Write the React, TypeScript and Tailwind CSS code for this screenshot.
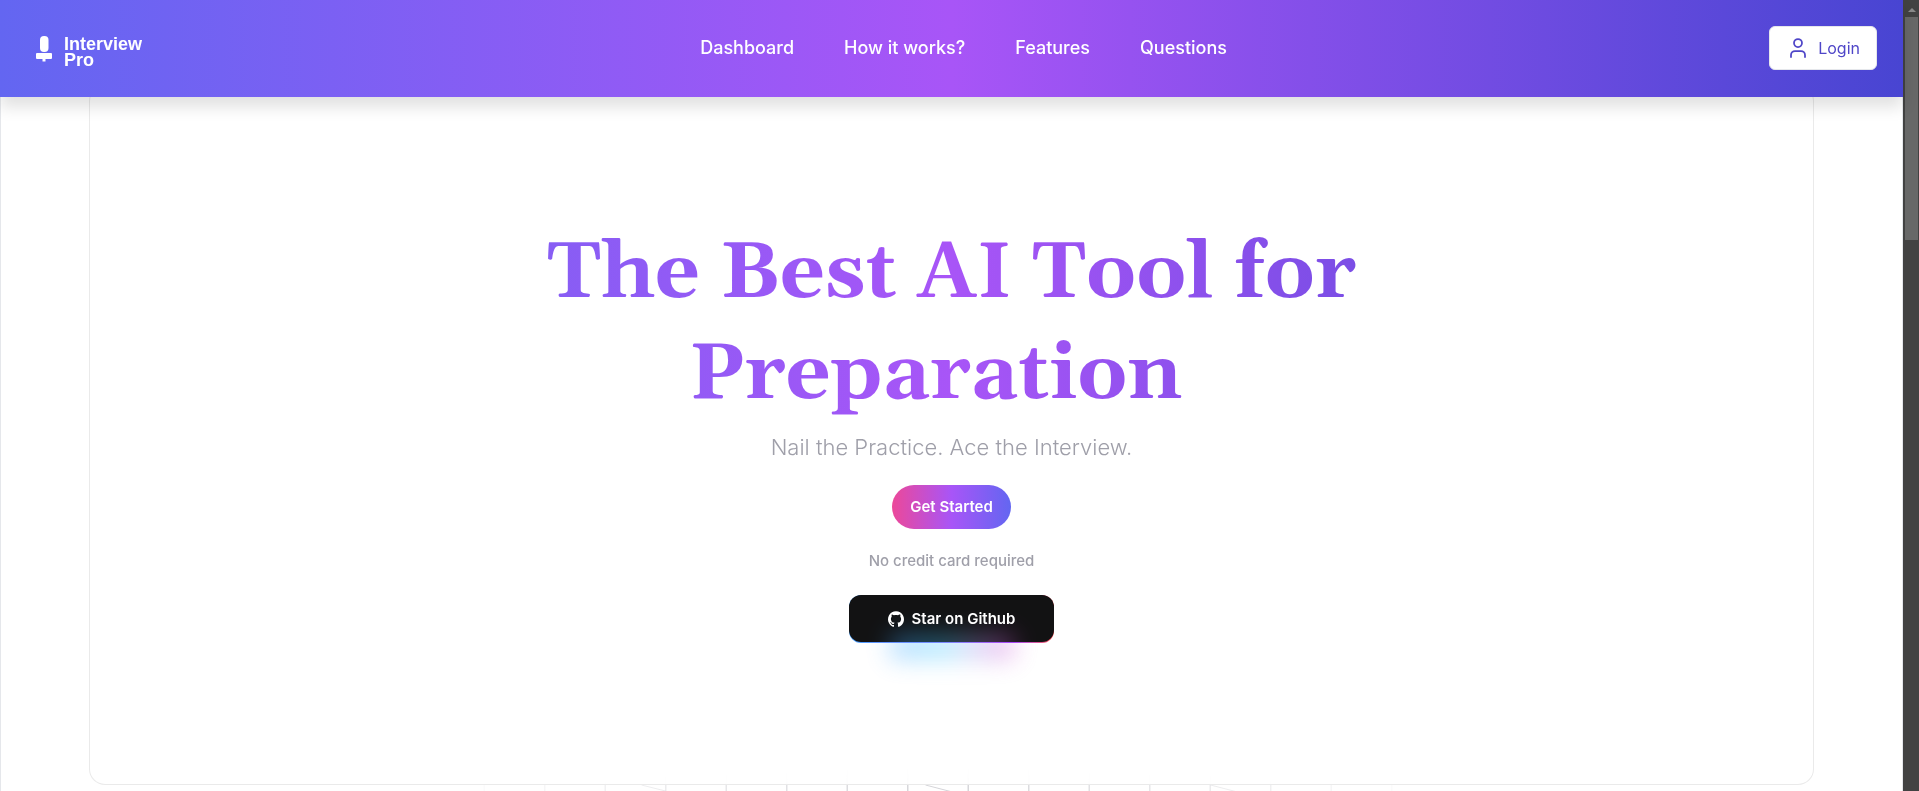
import { User } from "lucide-react";

const links = ["Dashboard", "How it works?", "Features", "Questions"];

const gridLines = Array.from({ length: 16 }, (_, i) => 484 + i * 60.5);

function GithubMark() {
  return (
    <svg viewBox="0 0 438.549 438.549" className="size-4" fill="currentColor" aria-hidden="true">
      <path d="M409.132 114.573c-19.608-33.596-46.205-60.194-79.798-79.8-33.598-19.607-70.277-29.408-110.063-29.408-39.781 0-76.472 9.804-110.063 29.408-33.596 19.605-60.192 46.204-79.8 79.8C9.803 148.168 0 184.854 0 224.63c0 47.78 13.94 90.745 41.827 128.906 27.884 38.164 63.906 64.572 108.063 79.227 5.14.954 8.945.283 11.419-1.996 2.475-2.282 3.711-5.14 3.711-8.562 0-.571-.049-5.708-.144-15.417a2549.81 2549.81 0 01-.144-25.406l-6.567 1.136c-4.187.767-9.469 1.092-15.846 1-6.374-.089-12.991-.757-19.842-1.999-6.854-1.231-13.229-4.086-19.13-8.559-5.898-4.473-10.085-10.328-12.56-17.556l-2.855-6.57c-1.903-4.374-4.899-9.233-8.992-14.559-4.093-5.331-8.232-8.945-12.419-10.848l-1.999-1.431c-1.332-.951-2.568-2.098-3.711-3.429-1.142-1.331-1.997-2.663-2.568-3.997-.572-1.335-.098-2.43 1.427-3.289 1.525-.859 4.281-1.276 8.28-1.276l5.708.853c3.807.763 8.516 3.042 14.133 6.851 5.614 3.806 10.229 8.754 13.846 14.842 4.38 7.806 9.657 13.754 15.846 17.847 6.184 4.093 12.419 6.136 18.699 6.136 6.28 0 11.704-.476 16.274-1.423 4.565-.952 8.848-2.383 12.847-4.285 1.713-12.758 6.377-22.559 13.988-29.41-10.848-1.14-20.601-2.857-29.264-5.14-8.658-2.286-17.605-5.996-26.835-11.14-9.235-5.137-16.896-11.516-22.985-19.126-6.09-7.614-11.088-17.61-14.987-29.979-3.901-12.374-5.852-26.648-5.852-42.826 0-23.035 7.52-42.637 22.557-58.817-7.044-17.318-6.379-36.732 1.997-58.24 5.52-1.715 13.706-.428 24.554 3.853 10.85 4.283 18.794 7.952 23.84 10.994 5.046 3.041 9.089 5.618 12.135 7.708 17.705-4.947 35.976-7.421 54.818-7.421s37.117 2.474 54.823 7.421l10.849-6.849c7.419-4.57 16.18-8.758 26.262-12.565 10.088-3.805 17.802-4.853 23.134-3.138 8.562 21.509 9.325 40.922 2.279 58.24 15.036 16.18 22.559 35.787 22.559 58.817 0 16.178-1.958 30.497-5.853 42.966-3.9 12.471-8.941 22.457-15.125 29.979-6.191 7.521-13.901 13.85-23.131 18.986-9.232 5.14-18.182 8.85-26.84 11.136-8.662 2.286-18.415 4.004-29.263 5.146 9.894 8.562 14.842 22.077 14.842 40.539v60.237c0 3.422 1.19 6.279 3.572 8.562 2.379 2.279 6.136 2.95 11.276 1.995 44.163-14.653 80.185-41.062 108.068-79.226 27.88-38.161 41.825-81.126 41.825-128.906-.01-39.771-9.818-76.454-29.414-110.049z" />
    </svg>
  );
}

function Backdrop() {
  return (
    <svg
      className="pointer-events-none absolute bottom-0 left-1/2 -z-10 h-[391px] w-[1903px] -translate-x-1/2"
      viewBox="0 0 1903 391"
      fill="none"
      aria-hidden="true"
    >
      <defs>
        <linearGradient id="side" x1="440" x2="1440" y1="0" y2="0" gradientUnits="userSpaceOnUse">
          <stop offset="0" stopColor="#d4d4d8" stopOpacity="0" />
          <stop offset="0.5" stopColor="#d4d4d8" />
          <stop offset="1" stopColor="#d4d4d8" stopOpacity="0" />
        </linearGradient>
      </defs>
      {gridLines.map((x) => (
        <rect key={x} x={x - 1} y="40" width="1.5" height="351" fill="url(#side)" />
      ))}
      <path d="M641 385l24 6M925 385l27 7M1210 385l27 7" stroke="url(#side)" />
    </svg>
  );
}

function Scrollbar() {
  return (
    <div className="flex w-4 shrink-0 flex-col items-center gap-1 bg-[#424242] pt-2 pl-px" aria-hidden="true">
      <svg viewBox="0 0 8 4" className="h-1 w-2 shrink-0" fill="#8a8a8a">
        <path d="M0 4L4 0l4 4z" />
      </svg>
      <div className="mt-px h-[223px] w-[13px] shrink-0 bg-[#686868]" />
    </div>
  );
}

export default function App() {
  return (
    <div className="flex h-screen overflow-hidden bg-white font-['Inter',sans-serif]">
      <div className="flex min-w-0 flex-1 flex-col">
        <header className="relative z-10 flex h-[97px] shrink-0 items-center justify-between bg-linear-to-r/srgb from-[#6366f1] via-[#a855f7] to-[#4845d2] pr-[26px] pb-px pl-9 shadow-[0_10px_15px_rgba(0,0,0,0.12)]">
          <a href="#" className="flex w-[122px] items-start gap-3 pt-2 text-white">
            <svg viewBox="0 0 16 26" className="h-[26px] w-4" fill="currentColor" aria-hidden="true">
              <rect x="4" y="0" width="8.5" height="16" rx="4" />
              <rect x="0" y="17" width="16" height="6" rx="1" />
              <rect x="6.5" y="22" width="3" height="3.5" />
            </svg>
            <span className="flex flex-col font-['Liberation_Sans',sans-serif] text-lg leading-4 font-bold">
              <span>Interview</span>
              <span>Pro</span>
            </span>
          </a>
          <nav className="flex gap-[50px] text-lg font-medium text-white">
            {links.map((l) => (
              <a key={l} href="#">
                {l}
              </a>
            ))}
          </nav>
          <button className="flex h-11 items-center gap-2 rounded-md border border-gray-200 bg-white px-4 text-base text-[#4f46c8]">
            <User className="size-6" strokeWidth={1.75} />
            Login
          </button>
        </header>
        <div className="relative isolate -mt-3 flex flex-1 flex-col border-x border-gray-200 px-[88px]">
          <Backdrop />
          <main className="flex h-[700px] shrink-0 flex-col items-center rounded-2xl border border-neutral-200/80 bg-white/85 pt-[138px] text-center backdrop-blur-md">
            <h1 className="flex flex-col self-stretch bg-linear-to-r/srgb from-[#6366f1] via-[#a855f7] to-[#4845d2] bg-clip-text font-[Georgia,Gelasio,serif] text-[79px] leading-[101px] font-bold text-transparent">
              <span>The Best AI Tool for</span>
              <span className="pr-8">Preparation</span>
            </h1>
            <p className="mt-[5px] text-[22px] leading-8 font-light text-zinc-400">
              Nail the Practice. Ace the Interview.
            </p>
            <button className="mt-[22px] h-11 rounded-full bg-linear-to-r/srgb from-[#ec4899] via-[#a855f7] to-[#6366f1] px-[18px] text-[15px] font-semibold text-white">
              Get Started
            </button>
            <p className="mt-5 text-[15px] leading-6 font-medium text-zinc-400">No credit card required</p>
            <button className="relative mt-[22px] flex h-12 w-[205px] items-center justify-center rounded-xl bg-linear-to-r from-[#42a1ff] via-[#a142ff] via-80% to-[#ff4242] text-[15px] font-semibold text-white">
              <span className="absolute inset-x-0 top-0 bottom-px rounded-xl bg-[#121213]" />
              <span className="absolute -bottom-4 left-1/2 h-6 w-3/5 -translate-x-1/2 bg-linear-to-r from-[#42a1ff] via-[#42d0ff] via-45% to-[#d142d0] opacity-40 blur-md" />
              <span className="relative flex items-center gap-2">
                <GithubMark />
                Star on Github
              </span>
            </button>
          </main>
        </div>
      </div>
      <Scrollbar />
    </div>
  );
}
